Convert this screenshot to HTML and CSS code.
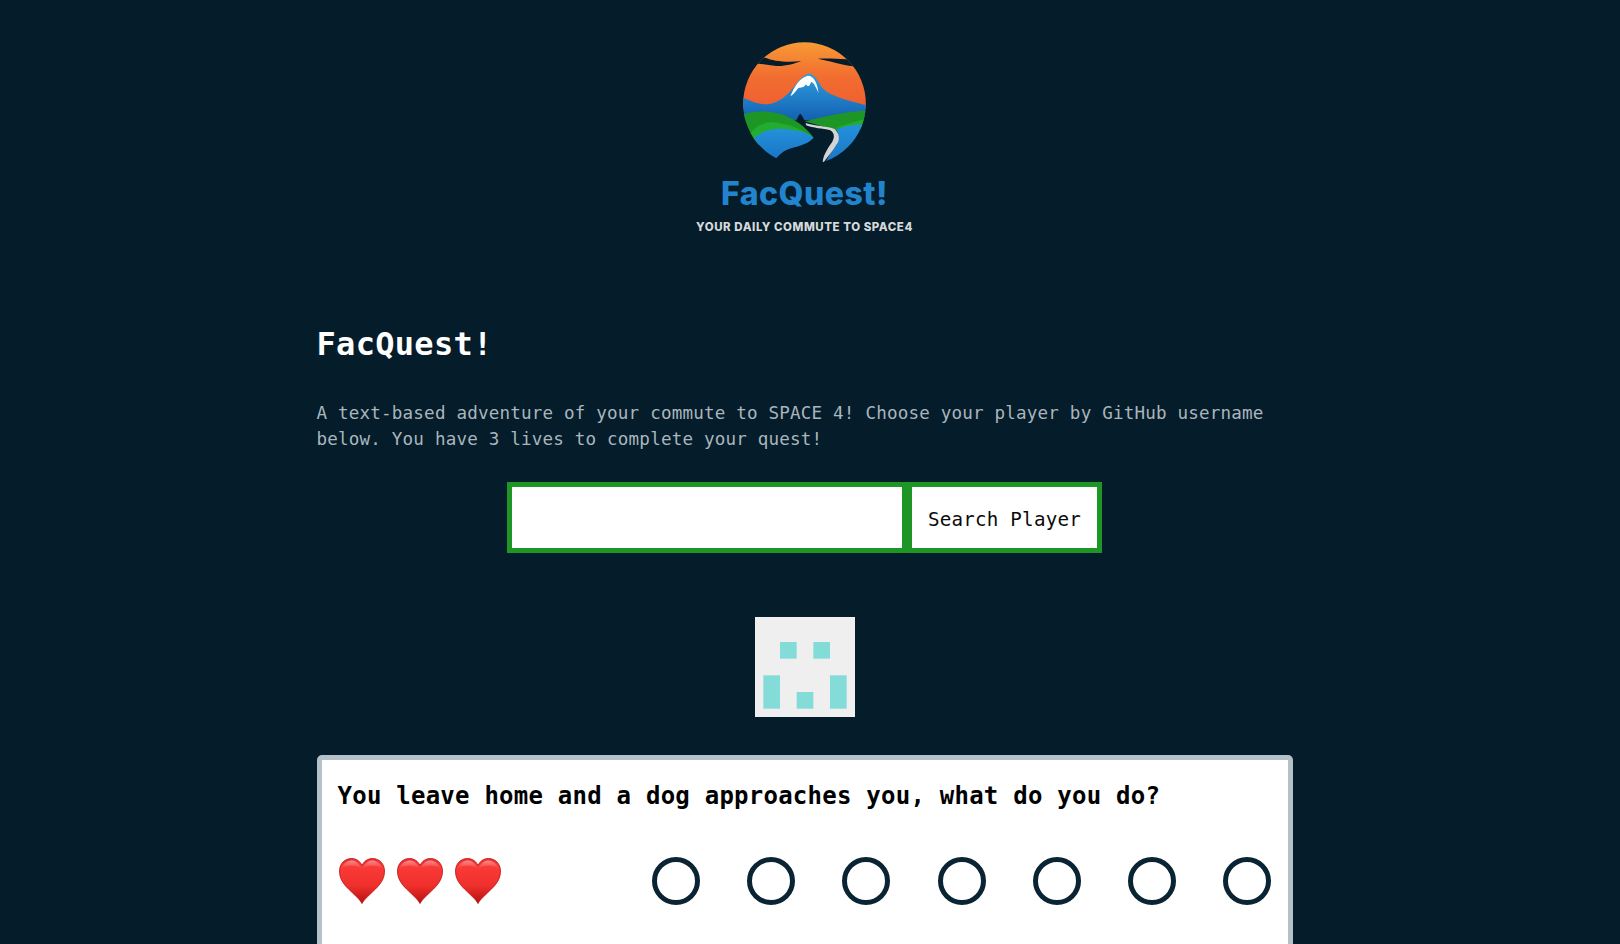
FILE: index.html
```html
<!DOCTYPE html>
<html lang="en">
<head>
<meta charset="utf-8">
<title>FacQuest!</title>
<link rel="stylesheet" href="styles.css">
</head>
<body>
<header class="brand">
  <svg class="brand-mark" viewBox="188 35 374 366" aria-hidden="true">
    <defs>
      <clipPath id="disc"><circle cx="375" cy="220" r="184"/></clipPath>
      <linearGradient id="sky" x1="0" y1="0" x2="0" y2="1"><stop offset="0" stop-color="#f89c36"/><stop offset=".55" stop-color="#f26c30"/><stop offset="1" stop-color="#ee5f30"/></linearGradient>
      <linearGradient id="lake" x1="0" y1="0" x2="0" y2="1"><stop offset="0" stop-color="#2b9fdd"/><stop offset="1" stop-color="#1560b2"/></linearGradient>
      <linearGradient id="water" x1="0" y1="0" x2="0" y2="1"><stop offset="0" stop-color="#2392da"/><stop offset="1" stop-color="#1a6fc0"/></linearGradient>
    </defs>
    <g clip-path="url(#disc)">
      <rect x="180" y="30" width="390" height="205" fill="url(#sky)"/>
      <path d="M180 82H258C280 92 320 97 365 92C345 100 320 108 290 107C270 105 250 100 235 100L180 110Z" fill="#051c2a"/>
      <path d="M415 85C440 83 470 85 500 87H570V112L520 108C490 104 450 92 415 85Z" fill="#051c2a"/>
      <path d="M180 198C200 205 225 220 260 222C290 222 315 202 335 180C350 162 362 140 385 130C402 128 414 150 424 167C440 188 465 197 490 205C515 213 540 218 570 228V270H180Z" fill="url(#lake)"/>
      <path d="M333 197C343 173 358 143 385 136C404 136 414 160 417 188C410 172 404 158 395 154C391 167 386 172 379 162C373 174 363 170 356 174C349 182 342 194 333 197Z" fill="#fff"/>
      <path d="M180 254C215 245 250 238 300 250C340 260 380 290 402 322L225 345L180 300Z" fill="#1e9626"/>
      <path d="M375 273C420 265 470 246 570 240V300H470Z" fill="#1e9626"/>
      <path d="M210 312C225 290 250 275 280 275C320 280 370 295 402 322L225 345Z" fill="#22ac30"/>
      <path d="M465 296C490 285 520 275 570 264V292H480Z" fill="#22ac30"/>
      <path d="M222 325C245 305 270 295 300 295C350 297 385 305 402 322C390 338 365 345 330 355C310 362 298 375 288 386L220 400Z" fill="url(#water)"/>
      <path d="M470 298C495 288 525 282 570 282V420H430C432 405 450 370 470 345C480 325 478 310 470 298Z" fill="url(#water)"/>
      <path d="M378 278C405 287 445 288 465 296C476 306 482 320 476 335C462 360 440 385 430 400C428 382 440 360 458 335C468 318 462 305 452 300C430 294 400 294 380 285Z" fill="#d2d4d6"/>
      <path d="M350 270C354 264 358 252 362 250C368 254 374 265 378 280L372 283C365 278 356 274 350 270Z" fill="#051c2a"/>
      <path d="M220 400L288 386L430 398V420H220Z" fill="#051c2a"/>
    </g>
  </svg>
  <div class="brand-name">FacQuest!</div>
  <div class="brand-tag">YOUR DAILY COMMUTE TO SPACE4</div>
</header>
<main class="page">
  <h1 class="title">FacQuest!</h1>
  <p class="intro">A text-based adventure of your commute to SPACE 4! Choose your player by GitHub username below. You have 3 lives to complete your quest!</p>
  <form class="search">
    <input class="search-input" type="text" aria-label="GitHub username">
    <button class="search-button" type="button">Search Player</button>
  </form>
  <svg class="avatar" viewBox="0 0 300 300" role="img" aria-label="Player avatar">
    <rect width="300" height="300" fill="#efefef"/>
    <g fill="#84dcd8">
      <rect x="75" y="75" width="50" height="50"/>
      <rect x="175" y="75" width="50" height="50"/>
      <rect x="25" y="175" width="50" height="100"/>
      <rect x="125" y="225" width="50" height="50"/>
      <rect x="225" y="175" width="50" height="100"/>
    </g>
  </svg>
  <section class="card">
    <h2 class="question">You leave home and a dog approaches you, what do you do?</h2>
    <div class="status">
      <div class="lives">
        <svg class="heart" viewBox="0 0 46 46"><use href="#heart-shape"/></svg>
        <svg class="heart" viewBox="0 0 46 46"><use href="#heart-shape"/></svg>
        <svg class="heart" viewBox="0 0 46 46"><use href="#heart-shape"/></svg>
      </div>
      <div class="steps">
        <span class="step"></span><span class="step"></span><span class="step"></span><span class="step"></span><span class="step"></span><span class="step"></span><span class="step"></span>
      </div>
    </div>
  </section>
</main>
<svg class="defs" aria-hidden="true">
  <defs>
    <linearGradient id="heart-fill" x1="0" y1="0" x2="0" y2="1"><stop offset="0" stop-color="#ee2b2b"/><stop offset=".18" stop-color="#f93a36"/><stop offset=".6" stop-color="#f0302c"/><stop offset="1" stop-color="#b80f10"/></linearGradient>
    <linearGradient id="heart-gloss" x1="0" y1="0" x2="0" y2="1"><stop offset="0" stop-color="#fff" stop-opacity=".45"/><stop offset="1" stop-color="#fff" stop-opacity="0"/></linearGradient>
    <symbol id="heart-shape" viewBox="0 0 46 46">
      <path d="M23 45.500C21 41.500 15 36.500 9.500 31C4 25.500 .5 20.500 .5 13C.5 6 5.500 .5 12.500 .5C17 .5 21 3 23 7.500C25 3 29 .5 33.500 .5C40.500 .5 45.500 6 45.500 13C45.500 20.500 42 25.500 36.500 31C31 36.500 25 41.500 23 45.500Z" fill="url(#heart-fill)" stroke="#b81214" stroke-width=".8"/>
      <path d="M3 10C5 4 10 2 14 2.500C17 3 20 5 22.500 10.500C19 7.500 9 6.500 3 10ZM43 10C41 4 36 2 32 2.500C29 3 26 5 23.500 10.500C27 7.500 37 6.500 43 10Z" fill="url(#heart-gloss)"/>
    </symbol>
  </defs>
</svg>
</body>
</html>
```
FILE: styles.css
```css
* { box-sizing: border-box; }
html { background: #051c2a; }
body {
  margin: 0;
  padding-right: 11px;
  background: #051c2a;
  color: #fff;
  font-family: "DejaVu Sans Mono", "Liberation Mono", monospace;
}
.brand {
  display: flex;
  flex-direction: column;
  align-items: center;
  padding-top: 42px;
}
.brand-mark { width: 125px; height: 122px; display: block; }
.brand-name {
  margin-top: 10px;
  font-family: "Inter", "Lato", sans-serif;
  font-weight: 800;
  font-size: 32px;
  line-height: 40px;
  letter-spacing: .45px;
  color: #2284cc;
}
.brand-tag {
  margin-top: 5px;
  font-family: "Inter", "Lato", sans-serif;
  font-weight: 800;
  font-size: 11.5px;
  line-height: 16px;
  letter-spacing: .55px;
  color: #d6d9db;
}
.page {
  width: 976px;
  margin: 0 auto;
  padding-top: 89px;
  display: flex;
  flex-direction: column;
}
.title {
  margin: 0;
  font-size: 32px;
  line-height: 40px;
  font-weight: 700;
  letter-spacing: .3px;
}
.intro {
  margin: 36px 0 0;
  font-size: 17.6px;
  line-height: 26px;
  letter-spacing: .17px;
  color: #a8b6bd;
}
.search {
  align-self: center;
  display: flex;
  margin-top: 30px;
}
.search-input, .search-button {
  height: 71px;
  border: 5px solid #1e9626;
  background: #fff;
  border-radius: 0;
  font-family: inherit;
  outline: none;
}
.search-input { width: 400px; }
.search-button {
  width: 195px;
  padding: 3px 0 0;
  color: #0a0a0a;
  font-size: 19.2px;
  letter-spacing: .2px;
}
.avatar {
  align-self: center;
  width: 100px;
  height: 100px;
  margin-top: 64px;
  display: block;
}
.card {
  margin-top: 38px;
  height: 300px;
  border: 5px solid #b5c1c9;
  border-radius: 5px;
  background: #fff;
  padding: 20px 16px 16px;
  color: #000;
}
.question {
  margin: 0;
  font-size: 24px;
  line-height: 32px;
  font-weight: 700;
  letter-spacing: .24px;
}
.status {
  display: flex;
  justify-content: space-between;
  align-items: center;
  margin: 45px .5px 0 0;
}
.lives { display: flex; gap: 12px; padding-left: 1px; }
.heart { width: 46px; height: 46px; display: block; }
.steps { display: flex; gap: 47.17px; }
.step {
  width: 48px;
  height: 48px;
  border: 5px solid #0a2433;
  border-radius: 50%;
}
.defs { position: absolute; width: 0; height: 0; }
```
